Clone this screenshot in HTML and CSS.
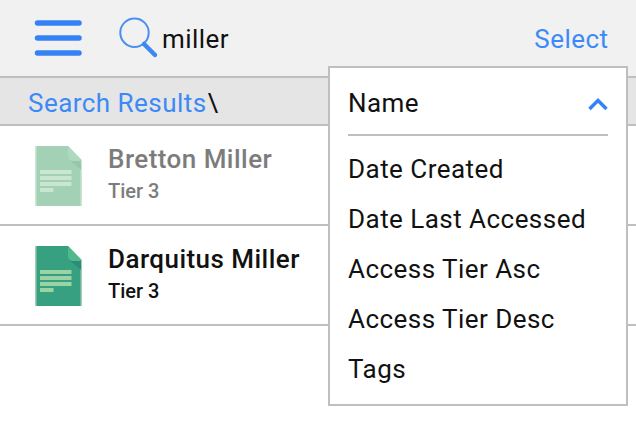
FILE: index.html
```html
<!DOCTYPE html>
<html lang="en">
<head>
<meta charset="utf-8">
<title>Search Results</title>
<link rel="stylesheet" href="styles.css">
</head>
<body>
<header class="topbar">
  <svg class="burger" viewBox="0 0 48 38"><path d="M3.500 4H45M3.500 19H45M3.500 34H45"/></svg>
  <svg class="search-icon" viewBox="0 0 42 42"><circle cx="16.500" cy="15.700" r="14.200"/><path d="M26 27L37 38"/></svg>
  <span class="query">miller</span>
  <a class="select">Select</a>
</header>
<nav class="crumbs"><a class="crumb">Search Results</a><span class="slash">\</span></nav>
<main>
  <article class="row dim">
    <svg class="doc" viewBox="0 0 48 60"><path class="edge" d="M0 0H33L47 14V60H0Z"/><path class="page" d="M1.500 0H33L45.500 14V60H1.500Z"/><path class="shade" d="M34 14H46V24Z"/><path class="fold" d="M33 0L46.500 14V15H38Q33 15 33 10Z"/><path class="lines" d="M5 26H36.500M5 32H36.500M5 38H36.500M5 44H18.500"/></svg>
    <div class="info"><div class="name">Bretton Miller</div><div class="tier">Tier 3</div></div>
  </article>
  <article class="row">
    <svg class="doc" viewBox="0 0 48 60"><path class="edge" d="M0 0H33L47 14V60H0Z"/><path class="page" d="M1.500 0H33L45.500 14V60H1.500Z"/><path class="shade" d="M34 14H46V24Z"/><path class="fold" d="M33 0L46.500 14V15H38Q33 15 33 10Z"/><path class="lines" d="M5 26H36.500M5 32H36.500M5 38H36.500M5 44H18.500"/></svg>
    <div class="info"><div class="name">Darquitus Miller</div><div class="tier">Tier 3</div></div>
  </article>
</main>
<div class="menu">
  <div class="menu-head"><span>Name</span><svg class="chevron" viewBox="0 0 20 14"><path d="M1.500 12L10 3.500L18.500 12"/></svg></div>
  <ul class="options">
    <li>Date Created</li>
    <li>Date Last Accessed</li>
    <li>Access Tier Asc</li>
    <li>Access Tier Desc</li>
    <li>Tags</li>
  </ul>
</div>
</body>
</html>
```
FILE: styles.css
```css
* { box-sizing: border-box; }
body { margin: 0; height: 436px; overflow: hidden; background: #fff; color: #111; font: 26px/30px Roboto, sans-serif; letter-spacing: 0.46px; }
svg { display: block; flex: none; fill: none; }
.topbar { display: flex; align-items: flex-start; height: 78px; padding: 0 27.500px 0 34px; background: #f1f1f1; border-bottom: 2px solid #bfbfbf; }
.burger { width: 48px; height: 38px; margin-top: 19px; stroke: #3483f5; stroke-width: 5.500; stroke-linecap: round; }
.search-icon { width: 42px; height: 42px; margin: 17px 0 0 35.500px; stroke: #4a90f2; stroke-width: 2; }
.search-icon path { stroke: #3d88f2; stroke-width: 4.500; stroke-linecap: round; }
.query { margin: 24px 0 0 2.500px; }
.select { margin: 24px 0 0 auto; color: #3c8af5; }
.crumbs { height: 48px; padding: 10px 28px 0; background: #e5e5e5; border-bottom: 2px solid #bfbfbf; }
.crumb { color: #3c8af5; }
.slash { margin-left: 1px; }
.row { display: flex; height: 100px; padding: 20px 0 0 34.500px; border-bottom: 2px solid #bfbfbf; }
.doc { width: 48px; height: 60px; }
.edge { fill: #a5cdb6; }
.page { fill: #37a081; }
.shade { fill: #2d8c76; }
.fold { fill: #50b98c; }
.lines { stroke: #9bd4a4; stroke-width: 4; }
.info { margin-left: 25.500px; }
.name { margin-top: -2px; font-weight: 500; }
.tier { margin-top: 5px; font-size: 20px; line-height: 24px; font-weight: 500; letter-spacing: 0; }
.dim .info { color: #7c7c7c; }
.dim .edge { fill: #cce6d4; }
.dim .page { fill: #a3d1b6; }
.dim .shade { fill: #96c7ad; }
.dim .fold { fill: #add9bf; }
.dim .lines { stroke: #cbe6d0; }
.menu { position: absolute; left: 328px; top: 66px; width: 300px; height: 340px; padding: 0 18px; background: #fff; border: 2px solid #bfbfbf; }
.menu-head { display: flex; justify-content: space-between; height: 68px; padding-top: 20px; border-bottom: 2px solid #bfbfbf; box-sizing: content-box; height: 46px; }
.chevron { width: 20px; height: 14px; margin-top: 8.500px; stroke: #3483f5; stroke-width: 3.500; }
.options { margin: 18px 0 0; padding: 0; list-style: none; }
.options li { height: 50px; white-space: nowrap; }
```
